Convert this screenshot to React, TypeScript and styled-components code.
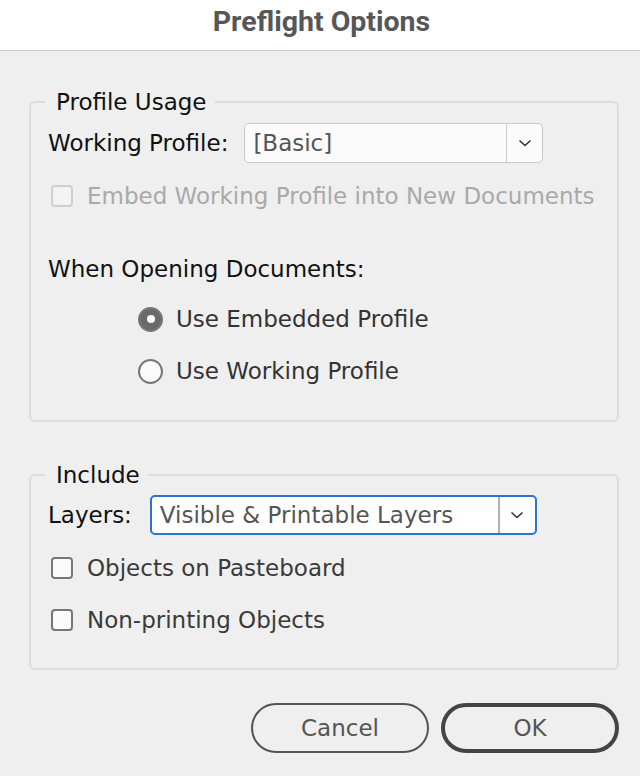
import styled, { createGlobalStyle } from "styled-components";

const GlobalStyle = createGlobalStyle`
  html, body {
    margin: 0;
    padding: 0;
    background: #efefef;
  }
  body {
    font-family: "DejaVu Sans", "Liberation Sans", sans-serif;
  }
`;

const FONT = `"DejaVu Sans", "Liberation Sans", sans-serif`;

const Dialog = styled.div`
  width: 640px;
  height: 776px;
  background: #efefef;
  display: flex;
  flex-direction: column;
  overflow: hidden;
  font-family: ${FONT};
`;

const TitleBar = styled.div`
  height: 50px;
  background: #fff;
  border-bottom: 1px solid #cdcdcd;
  display: flex;
  align-items: center;
  justify-content: center;
`;

const Title = styled.h1`
  margin: 0 0 8px 3px;
  font-family: Roboto, "Liberation Sans", sans-serif;
  font-weight: 700;
  font-size: 28.5px;
  color: #575757;
`;

const Body = styled.div`
  display: flex;
  flex-direction: column;
  padding: 0 21px 0 29px;
`;

const Group = styled.fieldset<{ $top: number; $bottom: number }>`
  margin: ${(p) => p.$top}px 0 0 0;
  padding: 0 17px ${(p) => p.$bottom}px 17px;
  border: 2px solid #dcdcdc;
  border-radius: 6px;
  min-width: 0;
`;

const Legend = styled.legend`
  margin-left: -3px;
  padding: 0 8px 0 11px;
  height: 30px;
  line-height: 30px;
  font-size: 23px;
  color: #111;
`;

const FieldRow = styled.div<{ $gap: number; $top: number }>`
  display: flex;
  align-items: center;
  gap: ${(p) => p.$gap}px;
  height: 40px;
  margin-top: ${(p) => p.$top}px;
`;

const Label = styled.span`
  font-size: 23px;
  color: #111;
  white-space: nowrap;
`;

const Select = styled.div<{ $width: number; $focused?: boolean }>`
  box-sizing: border-box;
  width: ${(p) => p.$width}px;
  height: 40px;
  display: flex;
  align-items: stretch;
  border: ${(p) => (p.$focused ? "2px solid #2a74d5" : "1.5px solid #c9c9c9")};
  border-radius: 5px;
  background: ${(p) => (p.$focused ? "#fff" : "#fbfbfb")};
`;

const SelectValue = styled.span`
  flex: 1;
  display: flex;
  align-items: center;
  padding-left: 8px;
  font-size: 23px;
  color: #555;
  white-space: nowrap;
  overflow: hidden;
`;

const SelectArrow = styled.span<{ $focused?: boolean }>`
  width: 35px;
  display: flex;
  align-items: center;
  justify-content: center;
  border-left: ${(p) => (p.$focused ? "2px solid #b0b0b0" : "1.5px solid #c9c9c9")};
`;

const CheckRow = styled.label<{ $top: number; $disabled?: boolean }>`
  display: flex;
  align-items: center;
  gap: 14px;
  height: 22px;
  margin-top: ${(p) => p.$top}px;
  padding-left: 3px;
  font-size: 23px;
  color: ${(p) => (p.$disabled ? "#a9a9a9" : "#3a3a3a")};
  white-space: nowrap;
`;

const Box = styled.span<{ $disabled?: boolean }>`
  box-sizing: border-box;
  width: 22px;
  height: 22px;
  border: 2px solid ${(p) => (p.$disabled ? "#cfcfcf" : "#777")};
  border-radius: 4px;
  background: ${(p) => (p.$disabled ? "#f3f3f3" : "#fafafa")};
  flex-shrink: 0;
`;

const Heading = styled.div`
  height: 30px;
  line-height: 30px;
  margin-top: 47px;
  font-size: 23px;
  color: #111;
`;

const RadioRow = styled.label<{ $top: number }>`
  display: flex;
  align-items: center;
  gap: 13px;
  height: 30px;
  margin-top: ${(p) => p.$top}px;
  padding-left: 90px;
  font-size: 23px;
  color: #333;
`;

const Radio = styled.span<{ $checked?: boolean }>`
  box-sizing: border-box;
  width: 25px;
  height: 25px;
  border-radius: 50%;
  border: 2px solid #777;
  background: ${(p) => (p.$checked ? "#6a6a6a" : "#fafafa")};
  display: flex;
  align-items: center;
  justify-content: center;
  flex-shrink: 0;

  &::after {
    content: "";
    display: ${(p) => (p.$checked ? "block" : "none")};
    width: 8px;
    height: 8px;
    border-radius: 50%;
    background: #fff;
  }
`;

const Buttons = styled.div`
  display: flex;
  justify-content: flex-end;
  gap: 12px;
  margin-top: 33px;
`;

const Button = styled.button<{ $primary?: boolean }>`
  box-sizing: border-box;
  width: 178px;
  height: 50px;
  border-radius: 25px;
  border: ${(p) => (p.$primary ? "4px solid #444" : "2px solid #555")};
  background: #efefef;
  font-family: ${FONT};
  font-size: 23px;
  color: #555;
  padding: 0;
`;

const Chevron = () => (
  <svg width="14" height="8" viewBox="0 0 14 8">
    <path d="M1.5 1.5 L7 6.5 L12.5 1.5" fill="none" stroke="#333" strokeWidth="1.6" />
  </svg>
);

export default function App() {
  return (
    <Dialog>
      <GlobalStyle />
      <TitleBar>
        <Title>Preflight Options</Title>
      </TitleBar>
      <Body>
        <Group $top={36} $bottom={34}>
          <Legend>Profile Usage</Legend>
          <FieldRow $gap={16} $top={6}>
            <Label>Working Profile:</Label>
            <Select $width={299}>
              <SelectValue>[Basic]</SelectValue>
              <SelectArrow>
                <Chevron />
              </SelectArrow>
            </Select>
          </FieldRow>
          <CheckRow $top={22} $disabled>
            <Box $disabled />
            Embed Working Profile into New Documents
          </CheckRow>
          <Heading>When Opening Documents:</Heading>
          <RadioRow $top={20}>
            <Radio $checked />
            Use Embedded Profile
          </RadioRow>
          <RadioRow $top={22}>
            <Radio />
            Use Working Profile
          </RadioRow>
        </Group>
        <Group $top={38} $bottom={37}>
          <Legend>Include</Legend>
          <FieldRow $gap={18} $top={5}>
            <Label>Layers:</Label>
            <Select $width={387} $focused>
              <SelectValue>Visible &amp; Printable Layers</SelectValue>
              <SelectArrow $focused>
                <Chevron />
              </SelectArrow>
            </Select>
          </FieldRow>
          <CheckRow $top={22}>
            <Box />
            Objects on Pasteboard
          </CheckRow>
          <CheckRow $top={30}>
            <Box />
            Non-printing Objects
          </CheckRow>
        </Group>
        <Buttons>
          <Button>Cancel</Button>
          <Button $primary>OK</Button>
        </Buttons>
      </Body>
    </Dialog>
  );
}
